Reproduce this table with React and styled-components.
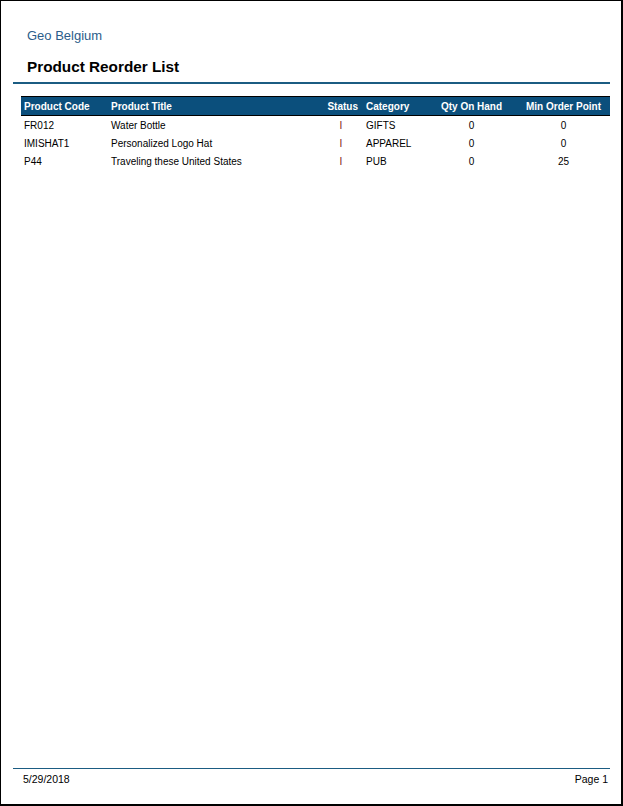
import React from "react";
import styled, { createGlobalStyle } from "styled-components";

const GlobalStyle = createGlobalStyle`
  html, body {
    margin: 0;
    padding: 0;
    background: #fff;
  }
  body {
    font-family: "Liberation Sans", Arial, sans-serif;
    color: #000;
  }
`;

const rows = [
  { code: "FR012", title: "Water Bottle", status: "I", category: "GIFTS", qty: 0, min: 0 },
  { code: "IMISHAT1", title: "Personalized Logo Hat", status: "I", category: "APPAREL", qty: 0, min: 0 },
  { code: "P44", title: "Traveling these United States", status: "I", category: "PUB", qty: 0, min: 25 },
];

const columns = [
  { key: "code", label: "Product Code", width: 87, align: "left", left: 3 },
  { key: "title", label: "Product Title", width: 213, align: "left", left: 3 },
  { key: "status", label: "Status", width: 40, align: "right", left: 3 },
  { key: "category", label: "Category", width: 71, align: "left", left: 5 },
  { key: "qty", label: "Qty On Hand", width: 79, align: "center", left: 3 },
  { key: "min", label: "Min Order Point", width: 99, align: "center", left: 9 },
];

const App = () => {
  return (
    <>
      <GlobalStyle />
      <Page>
        <Header>
          <Company>Geo Belgium</Company>
          <Title>Product Reorder List</Title>
        </Header>
        <Table>
          <colgroup>
            {columns.map((c) => (
              <col key={c.key} style={{ width: c.width }} />
            ))}
          </colgroup>
          <thead>
            <tr>
              {columns.map((c) => (
                <Th key={c.key} $align={c.align} $left={c.left}>
                  {c.label}
                </Th>
              ))}
            </tr>
          </thead>
          <tbody>
            {rows.map((r) => (
              <tr key={r.code}>
                <Td>{r.code}</Td>
                <Td>{r.title}</Td>
                <Td $align="center" $status>
                  {r.status}
                </Td>
                <Td $left={5}>{r.category}</Td>
                <Td $align="center">{r.qty}</Td>
                <Td $align="center" $left={9}>
                  {r.min}
                </Td>
              </tr>
            ))}
          </tbody>
        </Table>
        <Footer>
          <span>5/29/2018</span>
          <span>Page 1</span>
        </Footer>
      </Page>
    </>
  );
};

const Page = styled.div`
  box-sizing: border-box;
  width: 623px;
  height: 806px;
  border: 1px solid #000;
  border-right-width: 2px;
  border-bottom-width: 2px;
  display: flex;
  flex-direction: column;
  padding: 0 11px 0 12px;
`;

const Header = styled.header`
  border-bottom: 2px solid #1b5c82;
  padding: 27px 0 5px 14px;
`;

const Company = styled.div`
  font-size: 13px;
  color: #2b5d8a;
  line-height: 16px;
`;

const Title = styled.h1`
  margin: 13px 0 0;
  font-size: 15.3px;
  font-weight: bold;
  line-height: 20px;
`;

const Table = styled.table`
  margin: 12px 0 0 8px;
  width: 589px;
  border-collapse: collapse;
  table-layout: fixed;
  font-size: 10px;
`;

const Th = styled.th`
  background: #0b4f7c;
  color: #fff;
  font-weight: bold;
  text-align: ${(p) => p.$align};
  height: 18px;
  padding: 0 3px 0 ${(p) => p.$left || 3}px;
  border-top: 1px solid #000;
  border-bottom: 1px solid #000;
  white-space: nowrap;
`;

const Td = styled.td`
  text-align: ${(p) => p.$align || "left"};
  color: ${(p) => (p.$status ? "#7a1010" : "#000")};
  height: 18px;
  padding: 0 3px 0 ${(p) => p.$left || 3}px;
  white-space: nowrap;
`;

const Footer = styled.footer`
  margin-top: auto;
  margin-bottom: 18px;
  border-top: 1px solid #1b5c82;
  display: flex;
  justify-content: space-between;
  padding: 4px 2px 0 10px;
  font-size: 10.5px;
  line-height: 13px;
`;

export default App;
